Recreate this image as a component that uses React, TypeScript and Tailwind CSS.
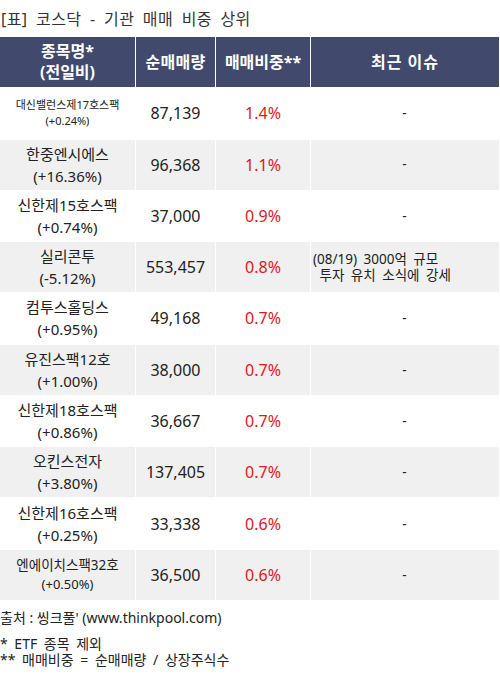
import React from "react";

type Row = {
  name: string;
  chg: string;
  vol: string;
  pct: string;
  issue?: string[];
  nameCls: string;
  chgCls: string;
};

const rows: Row[] = [
  { name: "대신밸런스제17호스팩", chg: "(+0.24%)", vol: "87,139", pct: "1.4%", nameCls: "text-[11px] leading-[16px]", chgCls: "text-[11px] leading-[16px]" },
  { name: "한중엔시에스", chg: "(+16.36%)", vol: "96,368", pct: "1.1%", nameCls: "text-[15px] leading-[22px]", chgCls: "text-[15px] leading-[22px]" },
  { name: "신한제15호스팩", chg: "(+0.74%)", vol: "37,000", pct: "0.9%", nameCls: "text-[15px] leading-[22px]", chgCls: "text-[15px] leading-[22px]" },
  { name: "실리콘투", chg: "(-5.12%)", vol: "553,457", pct: "0.8%", issue: ["(08/19) 3000억 규모", "\u00a0투자 유치 소식에 강세"], nameCls: "text-[15px] leading-[22px]", chgCls: "text-[15px] leading-[22px]" },
  { name: "컴투스홀딩스", chg: "(+0.95%)", vol: "49,168", pct: "0.7%", nameCls: "text-[15px] leading-[22px]", chgCls: "text-[15px] leading-[22px]" },
  { name: "유진스팩12호", chg: "(+1.00%)", vol: "38,000", pct: "0.7%", nameCls: "text-[15px] leading-[22px]", chgCls: "text-[15px] leading-[22px]" },
  { name: "신한제18호스팩", chg: "(+0.86%)", vol: "36,667", pct: "0.7%", nameCls: "text-[15px] leading-[22px]", chgCls: "text-[15px] leading-[22px]" },
  { name: "오킨스전자", chg: "(+3.80%)", vol: "137,405", pct: "0.7%", nameCls: "text-[15px] leading-[22px]", chgCls: "text-[15px] leading-[22px]" },
  { name: "신한제16호스팩", chg: "(+0.25%)", vol: "33,338", pct: "0.6%", nameCls: "text-[15px] leading-[22px]", chgCls: "text-[15px] leading-[22px]" },
  { name: "엔에이치스팩32호", chg: "(+0.50%)", vol: "36,500", pct: "0.6%", nameCls: "text-[13.5px] leading-[19px]", chgCls: "text-[13px] leading-[19px]" },
];

const font = { fontFamily: '"Noto Sans", "Noto Sans CJK KR", sans-serif' };

export default function App() {
  return (
    <div className="w-[500px] h-[675px] bg-white text-[#222]" style={font}>
      <div className="h-[37px] flex items-center pl-[1px] text-[16px] text-[#333] tracking-[0.4px] [word-spacing:4px]">
        [표] 코스닥 - 기관 매매 비중 상위
      </div>
      <div className="grid grid-cols-[135px_79px_94px_1fr] gap-x-px gap-y-[1.3px] w-[499px] bg-white">
        <div className="h-[50px] bg-[#414a6d] text-white font-bold text-[16px] leading-[21px] flex flex-col items-center justify-center">
          <span>종목명*</span>
          <span>(전일비)</span>
        </div>
        <div className="h-[50px] bg-[#414a6d] text-white font-bold text-[16px] flex items-center justify-center tracking-[0.3px]">순매매량</div>
        <div className="h-[50px] bg-[#414a6d] text-white font-bold text-[16px] flex items-center justify-center">매매비중**</div>
        <div className="h-[50px] bg-[#414a6d] text-white font-bold text-[16px] flex items-center justify-center tracking-[1px]">최근 이슈</div>
        {rows.map((r, i) => {
          const bg = i % 2 === 1 ? "bg-[#f0f0f0]" : "bg-white";
          return (
            <React.Fragment key={i}>
              <div className={`h-[50px] ${bg} flex flex-col items-center justify-center text-[#222]`}>
                <span className={r.nameCls}>{r.name}</span>
                <span className={r.chgCls}>{r.chg}</span>
              </div>
              <div className={`h-[50px] ${bg} flex items-center justify-center text-[16px] text-[#222]`}>{r.vol}</div>
              <div className={`h-[50px] ${bg} flex items-center justify-center text-[16px] text-[#e0161e]`}>{r.pct}</div>
              <div className={`h-[50px] ${bg} flex flex-col justify-center text-[13.5px] text-[#222]`}>
                {r.issue ? (
                  <div className="pl-[2px] leading-[16px] [word-spacing:3px]">
                    <div>{r.issue[0]}</div>
                    <div>{r.issue[1]}</div>
                  </div>
                ) : (
                  <div className="text-center pr-[1px]">-</div>
                )}
              </div>
            </React.Fragment>
          );
        })}
      </div>
      <div className="mt-[8px] text-[14px] leading-[20px] text-[#222]">출처 : 씽크풀' (www.thinkpool.com)</div>
      <div className="mt-[8px] text-[14px] leading-[16.5px] text-[#222] [word-spacing:3px]">
        <div>* ETF 종목 제외</div>
        <div>** 매매비중 = 순매매량 / 상장주식수</div>
      </div>
    </div>
  );
}
